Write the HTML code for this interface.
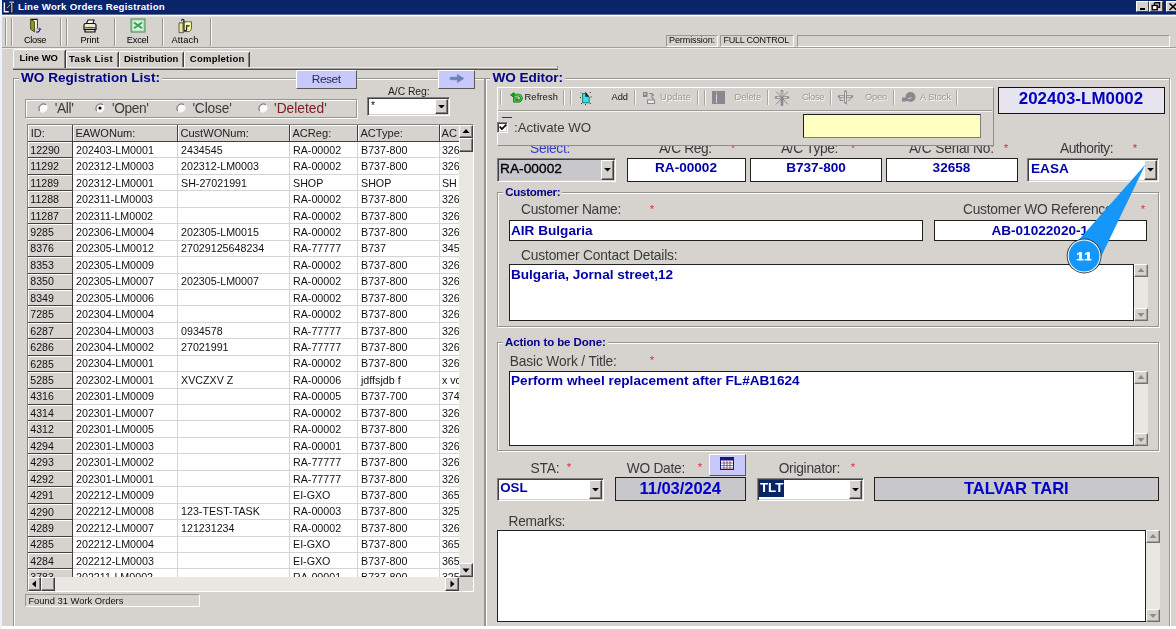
<!DOCTYPE html>
<html><head><meta charset="utf-8"><title>Line Work Orders Registration</title>
<style>
html,body{margin:0;padding:0}
body{width:1176px;height:629px;overflow:hidden;background:#D6D3CE;position:relative;font-family:"Liberation Sans",sans-serif}
.a{position:absolute;display:block}
.t{white-space:pre}
#app{position:absolute;left:0;top:0;width:1176px;height:629px;overflow:hidden;filter:blur(0.4px)}
</style></head>
<body>
<div id="app">
<div class="a" style="left:2px;top:0px;width:1174px;height:14px;background:#0A246A"></div>
<div class="a" style="left:2px;top:14px;width:1174px;height:1px;background:#5E6C9C"></div>
<div class="a" style="left:2px;top:15px;width:1174px;height:1px;background:#fff"></div>
<div class="a" style="left:2px;top:16px;width:1174px;height:1px;background:#E6E4DF"></div>
<svg class="a" style="left:3px;top:1px" width="12" height="13" viewBox="0 0 12 13">
<path d="M1.8 2v9.6h4.6" stroke="#101020" stroke-width="2.6" fill="none"/>
<path d="M9 2v10" stroke="#101020" stroke-width="2.6" fill="none"/>
<path d="M1.4 1.4v9.4h4.4" stroke="#f4f4f4" stroke-width="1.5" fill="none"/>
<path d="M6.4 1.3h4.6M8.8 1.6v9.8" stroke="#B8B49A" stroke-width="1.4" fill="none"/>
<path d="M4.4 6.6l1.2-1.2M6.2 4.6l.9-.9" stroke="#fff" stroke-width="1"/>
</svg>
<span class="a t" style="letter-spacing:0.230px;top:1.79px;font-size:9.7px;line-height:9.7px;color:#fff;font-weight:bold;left:18px;">Line Work Orders Registration</span>
<div class="a" style="left:1136px;top:1px;width:13px;height:11px;background:#D6D3CE;border-top:1px solid #fff;border-left:1px solid #fff;border-right:1px solid #404040;border-bottom:1px solid #404040;box-sizing:border-box"></div>
<div class="a" style="left:1140px;top:8px;width:5px;height:2px;background:#000"></div>
<div class="a" style="left:1149px;top:1px;width:14px;height:11px;background:#D6D3CE;border-top:1px solid #fff;border-left:1px solid #fff;border-right:1px solid #404040;border-bottom:1px solid #404040;box-sizing:border-box"></div>
<svg class="a" style="left:1151px;top:2px" width="10" height="9" viewBox="0 0 10 9"><path d="M3.5 0.8h5v4.5h-1.5 M3.5 0.8v2" stroke="#000" stroke-width="1.4" fill="none"/><rect x="1.2" y="3.4" width="5" height="4.4" fill="#fff" stroke="#000" stroke-width="1.4"/></svg>
<div class="a" style="left:1166px;top:1px;width:14px;height:11px;background:#D6D3CE;border-top:1px solid #fff;border-left:1px solid #fff;border-right:1px solid #404040;border-bottom:1px solid #404040;box-sizing:border-box"></div>
<svg class="a" style="left:1169px;top:3px" width="8" height="8" viewBox="0 0 8 8"><path d="M0.5 0.5l7 6.5M7.5 0.5l-7 6.5" stroke="#000" stroke-width="1.5"/></svg>
<div class="a" style="left:5px;top:18px;width:1px;height:28px;background:#969490"></div>
<div class="a" style="left:6px;top:18px;width:1px;height:28px;background:#F6F5F2"></div>
<div class="a" style="left:11px;top:18px;width:1px;height:28px;background:#969490"></div>
<div class="a" style="left:12px;top:18px;width:1px;height:28px;background:#F6F5F2"></div>
<div class="a" style="left:60px;top:18px;width:1px;height:28px;background:#969490"></div>
<div class="a" style="left:61px;top:18px;width:1px;height:28px;background:#F6F5F2"></div>
<div class="a" style="left:66px;top:18px;width:1px;height:28px;background:#969490"></div>
<div class="a" style="left:67px;top:18px;width:1px;height:28px;background:#F6F5F2"></div>
<div class="a" style="left:114px;top:18px;width:1px;height:28px;background:#969490"></div>
<div class="a" style="left:115px;top:18px;width:1px;height:28px;background:#F6F5F2"></div>
<div class="a" style="left:162px;top:18px;width:1px;height:28px;background:#969490"></div>
<div class="a" style="left:163px;top:18px;width:1px;height:28px;background:#F6F5F2"></div>
<div class="a" style="left:210px;top:18px;width:1px;height:28px;background:#969490"></div>
<div class="a" style="left:211px;top:18px;width:1px;height:28px;background:#F6F5F2"></div>
<div class="a" style="left:2px;top:47px;width:1174px;height:1px;background:#A09E98"></div>
<div class="a" style="left:2px;top:48px;width:1174px;height:1px;background:#EEECE8"></div>
<span class="a t" style="letter-spacing:-0.356px;top:35.53px;font-size:9.3px;line-height:9.3px;color:#000;left:35px;transform:translateX(-50%);">Close</span>
<span class="a t" style="letter-spacing:-0.125px;top:35.53px;font-size:9.3px;line-height:9.3px;color:#000;left:89.7px;transform:translateX(-50%);">Print</span>
<span class="a t" style="letter-spacing:-0.227px;top:35.53px;font-size:9.3px;line-height:9.3px;color:#000;left:137.6px;transform:translateX(-50%);">Excel</span>
<span class="a t" style="letter-spacing:0.140px;top:35.53px;font-size:9.3px;line-height:9.3px;color:#000;left:185px;transform:translateX(-50%);">Attach</span>
<svg class="a" style="left:28px;top:18px" width="15" height="16" viewBox="0 0 15 16">
<path d="M2.6 1.4h6.6v9.2" fill="none" stroke="#1a1a1a" stroke-width="1.1"/>
<rect x="6" y="2" width="2.7" height="8.4" fill="#fff"/>
<path d="M2.6 1.4l3.8 2v10.4l-3.8-2.6z" fill="#8E9C20" stroke="#3A4208" stroke-width="0.9"/>
<path d="M8.2 14c2.4.3 3.6-.7 3.5-2.6" fill="none" stroke="#2428C8" stroke-width="1.3"/>
<path d="M9.9 11.6l1.9-2.1 1.8 2.3z" fill="#2428C8"/>
</svg>
<svg class="a" style="left:82px;top:19px" width="16" height="15" viewBox="0 0 16 15">
<path d="M4.5 4.5l1.5-3.5h6l-1 3.5z" fill="#fff" stroke="#111" stroke-width="1.1"/>
<path d="M2 6.2c0-1 .8-1.7 1.8-1.7h8.4c1 0 1.8.7 1.8 1.7v4.3H2z" fill="#e8e8e8" stroke="#111" stroke-width="1.2"/>
<path d="M3 10.5h10v2.5H3z" fill="#d0d0d0" stroke="#111" stroke-width="1.2"/>
<path d="M6 8.3h4" stroke="#E8E800" stroke-width="1.6"/>
<path d="M2.6 8.8h10.8" stroke="#111" stroke-width="0.9"/>
</svg>
<svg class="a" style="left:130px;top:18.3px" width="16" height="15" viewBox="0 0 16 16" preserveAspectRatio="none">
<rect x="1" y="1" width="14" height="14" fill="#A4D4AC" stroke="#4E8E5C" stroke-width="1"/>
<rect x="2.7" y="2.7" width="10.6" height="10.6" fill="#DDF3E0"/>
<path d="M4 4.8l8 6.2M12 4.8l-8 6.2" stroke="#3AA356" stroke-width="2.1"/>
</svg>
<svg class="a" style="left:177px;top:18.2px" width="17" height="17.4" viewBox="0 0 17 16" preserveAspectRatio="none">
<path d="M2 4.5h4.5v9H2z" fill="#E8E890" stroke="#555" stroke-width="0.9"/>
<path d="M6 3.5h8.5v6.5l-2 2.5H6z" fill="#F4F49A" stroke="#555" stroke-width="0.9"/>
<path d="M4.5 2.5c0-1.6 2.5-1.6 2.5 0v8c0 1.6 2.6 1.6 2.6 0V7.3h3" fill="none" stroke="#222" stroke-width="1.2"/>
<path d="M9.6 5h3.2" stroke="#fff" stroke-width="1.2"/>
</svg>
<div class="a" style="left:666px;top:35px;width:52px;height:12px;background:#D6D3CE;box-sizing:border-box;border:1px solid;border-color:#9A9894 #fff #fff #9A9894"></div>
<div class="a" style="left:720px;top:35px;width:74px;height:12px;background:#D6D3CE;box-sizing:border-box;border:1px solid;border-color:#9A9894 #fff #fff #9A9894"></div>
<div class="a" style="left:797px;top:35px;width:373px;height:12px;background:#D6D3CE;box-sizing:border-box;border:1px solid;border-color:#9A9894 #fff #fff #9A9894"></div>
<span class="a t" style="letter-spacing:-0.092px;top:35.98px;font-size:9.0px;line-height:9.0px;color:#111;left:669px;">Permission:</span>
<span class="a t" style="letter-spacing:-0.224px;top:35.98px;font-size:9.0px;line-height:9.0px;color:#111;left:723.5px;">FULL CONTROL</span>
<div class="a" style="left:13px;top:67px;width:544px;height:1px;background:#ECEAE4"></div>
<div class="a" style="left:13px;top:68px;width:545px;height:1px;background:#A4A29E"></div>
<div class="a" style="left:13px;top:69px;width:545px;height:1px;background:#505050"></div>
<div class="a" style="left:557px;top:66px;width:1px;height:2px;background:#8a8a8a"></div>
<div class="a" style="left:67px;top:51px;width:51px;height:1px;background:#fff"></div>
<div class="a" style="left:66px;top:52px;width:1px;height:15px;background:#fff"></div>
<div class="a" style="left:118px;top:52px;width:1px;height:15px;background:#404040"></div>
<div class="a" style="left:117px;top:53px;width:1px;height:14px;background:#808080"></div>
<span class="a t" style="letter-spacing:0.391px;top:53.96px;font-size:9.5px;line-height:9.5px;color:#000;font-weight:bold;left:69px;">Task List</span>
<div class="a" style="left:120px;top:51px;width:63px;height:1px;background:#fff"></div>
<div class="a" style="left:119px;top:52px;width:1px;height:15px;background:#fff"></div>
<div class="a" style="left:183px;top:52px;width:1px;height:15px;background:#404040"></div>
<div class="a" style="left:182px;top:53px;width:1px;height:14px;background:#808080"></div>
<span class="a t" style="letter-spacing:0.107px;top:53.96px;font-size:9.5px;line-height:9.5px;color:#000;font-weight:bold;left:123.9px;">Distribution</span>
<div class="a" style="left:185px;top:51px;width:64px;height:1px;background:#fff"></div>
<div class="a" style="left:184px;top:52px;width:1px;height:15px;background:#fff"></div>
<div class="a" style="left:249px;top:52px;width:1px;height:15px;background:#404040"></div>
<div class="a" style="left:248px;top:53px;width:1px;height:14px;background:#808080"></div>
<span class="a t" style="letter-spacing:0.245px;top:53.96px;font-size:9.5px;line-height:9.5px;color:#000;font-weight:bold;left:189.8px;">Completion</span>
<div class="a" style="left:13px;top:49px;width:53px;height:19px;background:#D6D3CE"></div>
<div class="a" style="left:13px;top:50px;width:1px;height:18px;background:#fff"></div>
<div class="a" style="left:14px;top:49px;width:51px;height:1px;background:#fff"></div>
<div class="a" style="left:65px;top:50px;width:1px;height:18px;background:#404040"></div>
<div class="a" style="left:64px;top:51px;width:1px;height:17px;background:#808080"></div>
<span class="a t" style="letter-spacing:-0.004px;top:52.56px;font-size:9.5px;line-height:9.5px;color:#000;font-weight:bold;left:19.5px;">Line WO</span>
<div class="a" style="left:13px;top:78px;width:472px;height:582px;box-sizing:border-box;border:1px solid #969490"></div>
<div class="a" style="left:14px;top:79px;width:472px;height:582px;box-sizing:border-box;border:1px solid #fff;border-right-color:#fff;border-bottom-color:#fff;clip-path:polygon(0 0,calc(100% - 2px) 0,calc(100% - 2px) 1px,1px 1px,1px calc(100% - 2px),0 calc(100% - 2px),0 0, 100% 0, 100% 100%, 0 100%, 0 calc(100% - 1px), calc(100% - 1px) calc(100% - 1px), calc(100% - 1px) 0)"></div>
<div class="a" style="left:485px;top:78px;width:685px;height:582px;box-sizing:border-box;border:1px solid #969490"></div>
<div class="a" style="left:486px;top:79px;width:685px;height:582px;box-sizing:border-box;border:1px solid #fff;border-right-color:#fff;border-bottom-color:#fff;clip-path:polygon(0 0,calc(100% - 2px) 0,calc(100% - 2px) 1px,1px 1px,1px calc(100% - 2px),0 calc(100% - 2px),0 0, 100% 0, 100% 100%, 0 100%, 0 calc(100% - 1px), calc(100% - 1px) calc(100% - 1px), calc(100% - 1px) 0)"></div>
<div class="a" style="left:19px;top:72px;width:143px;height:12px;background:#D6D3CE"></div>
<span class="a t" style="letter-spacing:0.001px;top:70.69px;font-size:13.6px;line-height:13.6px;color:#00008B;font-weight:bold;left:21px;">WO Registration List:</span>
<div class="a" style="left:490px;top:72px;width:75px;height:12px;background:#D6D3CE"></div>
<span class="a t" style="letter-spacing:-0.048px;top:70.69px;font-size:13.6px;line-height:13.6px;color:#00008B;font-weight:bold;left:492.5px;">WO Editor:</span>
<div class="a" style="left:296px;top:70px;width:61px;height:19px;background:#C8C8FA;box-sizing:border-box;border:1px solid;border-color:#fff #585858 #585858 #fff"></div>
<span class="a t" style="letter-spacing:-0.406px;top:73.91px;font-size:11.8px;line-height:11.8px;color:#282850;left:326.2px;transform:translateX(-50%);">Reset</span>
<div class="a" style="left:438px;top:70px;width:37px;height:19px;background:#C8C8FA;box-sizing:border-box;border:1px solid;border-color:#fff #585858 #585858 #fff"></div>
<svg class="a" style="left:449px;top:72.6px" width="16" height="11" viewBox="0 0 16 11"><path d="M1.2 4.2h7.2V1.4l6.4 4.1-6.4 4.1V6.8H1.2z" fill="#6484B4" stroke="#5878A8" stroke-width="0.5"/></svg>
<div class="a" style="left:25px;top:99px;width:332px;height:19px;box-sizing:border-box;border:1px solid #969490"></div>
<div class="a" style="left:26px;top:100px;width:332px;height:19px;box-sizing:border-box;border:1px solid #fff;border-right-color:#fff;border-bottom-color:#fff;clip-path:polygon(0 0,calc(100% - 2px) 0,calc(100% - 2px) 1px,1px 1px,1px calc(100% - 2px),0 calc(100% - 2px),0 0, 100% 0, 100% 100%, 0 100%, 0 calc(100% - 1px), calc(100% - 1px) calc(100% - 1px), calc(100% - 1px) 0)"></div>
<svg class="a" style="left:37px;top:102px" width="12" height="12" viewBox="0 0 12 12"><circle cx="6" cy="6" r="4.2" fill="#fff"/><path d="M2.7 8.9A4.5 4.5 0 0 1 8.9 2.7" fill="none" stroke="#787878" stroke-width="1.2"/><path d="M9.3 3.1A4.5 4.5 0 0 1 3.1 9.3" fill="none" stroke="#f4f4f4" stroke-width="1.1"/></svg>
<span class="a t" style="letter-spacing:-0.346px;top:102.26px;font-size:13.75px;line-height:13.75px;color:#3a3a3a;left:54.7px;">&#x27;All&#x27;</span>
<svg class="a" style="left:94px;top:102px" width="12" height="12" viewBox="0 0 12 12"><circle cx="6" cy="6" r="4.2" fill="#fff"/><path d="M2.7 8.9A4.5 4.5 0 0 1 8.9 2.7" fill="none" stroke="#787878" stroke-width="1.2"/><path d="M9.3 3.1A4.5 4.5 0 0 1 3.1 9.3" fill="none" stroke="#f4f4f4" stroke-width="1.1"/><circle cx="6" cy="6" r="1.6" fill="#000"/></svg>
<span class="a t" style="letter-spacing:-0.415px;top:102.26px;font-size:13.75px;line-height:13.75px;color:#3a3a3a;left:112px;">&#x27;Open&#x27;</span>
<svg class="a" style="left:175px;top:102px" width="12" height="12" viewBox="0 0 12 12"><circle cx="6" cy="6" r="4.2" fill="#fff"/><path d="M2.7 8.9A4.5 4.5 0 0 1 8.9 2.7" fill="none" stroke="#787878" stroke-width="1.2"/><path d="M9.3 3.1A4.5 4.5 0 0 1 3.1 9.3" fill="none" stroke="#f4f4f4" stroke-width="1.1"/></svg>
<span class="a t" style="letter-spacing:-0.144px;top:102.26px;font-size:13.75px;line-height:13.75px;color:#3a3a3a;left:192.4px;">&#x27;Close&#x27;</span>
<svg class="a" style="left:257px;top:102px" width="12" height="12" viewBox="0 0 12 12"><circle cx="6" cy="6" r="4.2" fill="#fff"/><path d="M2.7 8.9A4.5 4.5 0 0 1 8.9 2.7" fill="none" stroke="#787878" stroke-width="1.2"/><path d="M9.3 3.1A4.5 4.5 0 0 1 3.1 9.3" fill="none" stroke="#f4f4f4" stroke-width="1.1"/></svg>
<span class="a t" style="letter-spacing:0.016px;top:102.26px;font-size:13.75px;line-height:13.75px;color:#7A2020;left:274px;">&#x27;Deleted&#x27;</span>
<span class="a t" style="letter-spacing:-0.082px;top:86.50px;font-size:10.4px;line-height:10.4px;color:#222;left:388px;">A/C Reg:</span>
<div class="a" style="left:367px;top:97px;width:83px;height:19px;background:#fff;box-sizing:border-box;border:1px solid;border-color:#808080 #fff #fff #808080;box-shadow:inset 1px 1px 0 #404040,inset -1px -1px 0 #D6D3CE"></div>
<div class="a" style="left:435px;top:99px;width:13px;height:15px;background:#D6D3CE;box-sizing:border-box;border:1px solid;border-color:#fff #404040 #404040 #fff;box-shadow:inset -1px -1px 0 #808080"></div>
<svg class="a" style="left:438.0px;top:104.9px" width="7" height="3.6" viewBox="0 0 7 3.6"><path d="M0.2 0h6.6L3.5 3.6z" fill="#000"/></svg>
<span class="a t" style="top:100.73px;font-size:10px;line-height:10px;color:#000;left:371px;">*</span>
<div class="a" style="left:27px;top:124px;width:447px;height:468px;background:#fff;box-sizing:border-box;border:1px solid;border-color:#808080 #fff #fff #808080"></div>
<div class="a" style="left:28px;top:125px;width:1px;height:465px;background:#404040"></div>
<div class="a" style="left:28px;top:124.5px;width:445px;height:1px;background:#404040"></div>
<div class="a" style="left:28px;top:125px;width:431px;height:452px;overflow:hidden">
<div class="a" style="left:0px;top:0px;width:431px;height:16px;background:#D6D3CE"></div>
<div class="a" style="left:0px;top:0px;width:1px;height:16px;background:#fff"></div>
<div class="a" style="left:0px;top:0px;width:45px;height:1px;background:#fff"></div>
<div class="a" style="left:44px;top:0px;width:1px;height:16px;background:#404040"></div>
<span class="a t" style="left:2.6999999999999993px;top:3.40px;font-size:11.1px;line-height:11.1px;color:#222">ID:</span>
<div class="a" style="left:45px;top:0px;width:1px;height:16px;background:#fff"></div>
<div class="a" style="left:45px;top:0px;width:105px;height:1px;background:#fff"></div>
<div class="a" style="left:149px;top:0px;width:1px;height:16px;background:#404040"></div>
<span class="a t" style="left:47.400000000000006px;top:3.40px;font-size:11.1px;line-height:11.1px;color:#222">EAWONum:</span>
<div class="a" style="left:150px;top:0px;width:1px;height:16px;background:#fff"></div>
<div class="a" style="left:150px;top:0px;width:112px;height:1px;background:#fff"></div>
<div class="a" style="left:261px;top:0px;width:1px;height:16px;background:#404040"></div>
<span class="a t" style="left:152.4px;top:3.40px;font-size:11.1px;line-height:11.1px;color:#222">CustWONum:</span>
<div class="a" style="left:262px;top:0px;width:1px;height:16px;background:#fff"></div>
<div class="a" style="left:262px;top:0px;width:68px;height:1px;background:#fff"></div>
<div class="a" style="left:329px;top:0px;width:1px;height:16px;background:#404040"></div>
<span class="a t" style="left:264.4px;top:3.40px;font-size:11.1px;line-height:11.1px;color:#222">ACReg:</span>
<div class="a" style="left:330px;top:0px;width:1px;height:16px;background:#fff"></div>
<div class="a" style="left:330px;top:0px;width:82px;height:1px;background:#fff"></div>
<div class="a" style="left:411px;top:0px;width:1px;height:16px;background:#404040"></div>
<span class="a t" style="left:332.4px;top:3.40px;font-size:11.1px;line-height:11.1px;color:#222">ACType:</span>
<div class="a" style="left:412px;top:0px;width:1px;height:16px;background:#fff"></div>
<div class="a" style="left:412px;top:0px;width:80px;height:1px;background:#fff"></div>
<div class="a" style="left:491px;top:0px;width:1px;height:16px;background:#404040"></div>
<span class="a t" style="left:413.6px;top:3.40px;font-size:11.1px;line-height:11.1px;color:#222">AC S/N:</span>
<div class="a" style="left:0px;top:16px;width:431px;height:1px;background:#404040"></div>
<div class="a" style="left:0px;top:17px;width:45px;height:16px;background:#D6D3CE"></div>
<div class="a" style="left:0px;top:17px;width:44px;height:1px;background:#fff"></div>
<div class="a" style="left:0px;top:17px;width:1px;height:16px;background:#fff"></div>
<div class="a" style="left:0px;top:32px;width:45px;height:1px;background:#404040"></div>
<div class="a" style="left:44px;top:17px;width:1px;height:16px;background:#404040"></div>
<span class="a t" style="left:2.3000000000000007px;top:19.83px;font-size:10.6px;line-height:10.6px;color:#111">12290</span>
<span class="a t" style="left:48.0px;top:19.74px;font-size:10.7px;line-height:10.7px;color:#111">202403-LM0001</span>
<span class="a t" style="left:153.0px;top:19.74px;font-size:10.7px;line-height:10.7px;color:#111">2434545</span>
<span class="a t" style="left:265.0px;top:19.74px;font-size:10.7px;line-height:10.7px;color:#111">RA-00002</span>
<span class="a t" style="left:333.0px;top:19.74px;font-size:10.7px;line-height:10.7px;color:#111">B737-800</span>
<span class="a t" style="left:413.9px;top:19.74px;font-size:10.7px;line-height:10.7px;color:#111">32658</span>
<div class="a" style="left:45px;top:32px;width:388px;height:1px;background:#D4D4D4"></div>
<div class="a" style="left:0px;top:33px;width:45px;height:17px;background:#D6D3CE"></div>
<div class="a" style="left:0px;top:33px;width:44px;height:1px;background:#fff"></div>
<div class="a" style="left:0px;top:33px;width:1px;height:17px;background:#fff"></div>
<div class="a" style="left:0px;top:49px;width:45px;height:1px;background:#404040"></div>
<div class="a" style="left:44px;top:33px;width:1px;height:17px;background:#404040"></div>
<span class="a t" style="left:2.3000000000000007px;top:36.27px;font-size:10.6px;line-height:10.6px;color:#111">11292</span>
<span class="a t" style="left:48.0px;top:36.18px;font-size:10.7px;line-height:10.7px;color:#111">202312-LM0003</span>
<span class="a t" style="left:153.0px;top:36.18px;font-size:10.7px;line-height:10.7px;color:#111">202312-LM0003</span>
<span class="a t" style="left:265.0px;top:36.18px;font-size:10.7px;line-height:10.7px;color:#111">RA-00002</span>
<span class="a t" style="left:333.0px;top:36.18px;font-size:10.7px;line-height:10.7px;color:#111">B737-800</span>
<span class="a t" style="left:413.9px;top:36.18px;font-size:10.7px;line-height:10.7px;color:#111">32658</span>
<div class="a" style="left:45px;top:49px;width:388px;height:1px;background:#D4D4D4"></div>
<div class="a" style="left:0px;top:50px;width:45px;height:16px;background:#D6D3CE"></div>
<div class="a" style="left:0px;top:50px;width:44px;height:1px;background:#fff"></div>
<div class="a" style="left:0px;top:50px;width:1px;height:16px;background:#fff"></div>
<div class="a" style="left:0px;top:65px;width:45px;height:1px;background:#404040"></div>
<div class="a" style="left:44px;top:50px;width:1px;height:16px;background:#404040"></div>
<span class="a t" style="left:2.3000000000000007px;top:52.71px;font-size:10.6px;line-height:10.6px;color:#111">11289</span>
<span class="a t" style="left:48.0px;top:52.62px;font-size:10.7px;line-height:10.7px;color:#111">202312-LM0001</span>
<span class="a t" style="left:153.0px;top:52.62px;font-size:10.7px;line-height:10.7px;color:#111">SH-27021991</span>
<span class="a t" style="left:265.0px;top:52.62px;font-size:10.7px;line-height:10.7px;color:#111">SHOP</span>
<span class="a t" style="left:333.0px;top:52.62px;font-size:10.7px;line-height:10.7px;color:#111">SHOP</span>
<span class="a t" style="left:413.9px;top:52.62px;font-size:10.7px;line-height:10.7px;color:#111">SH</span>
<div class="a" style="left:45px;top:65px;width:388px;height:1px;background:#D4D4D4"></div>
<div class="a" style="left:0px;top:66px;width:45px;height:17px;background:#D6D3CE"></div>
<div class="a" style="left:0px;top:66px;width:44px;height:1px;background:#fff"></div>
<div class="a" style="left:0px;top:66px;width:1px;height:17px;background:#fff"></div>
<div class="a" style="left:0px;top:82px;width:45px;height:1px;background:#404040"></div>
<div class="a" style="left:44px;top:66px;width:1px;height:17px;background:#404040"></div>
<span class="a t" style="left:2.3000000000000007px;top:69.15px;font-size:10.6px;line-height:10.6px;color:#111">11288</span>
<span class="a t" style="left:48.0px;top:69.06px;font-size:10.7px;line-height:10.7px;color:#111">202311-LM0003</span>
<span class="a t" style="left:153.0px;top:69.06px;font-size:10.7px;line-height:10.7px;color:#111"></span>
<span class="a t" style="left:265.0px;top:69.06px;font-size:10.7px;line-height:10.7px;color:#111">RA-00002</span>
<span class="a t" style="left:333.0px;top:69.06px;font-size:10.7px;line-height:10.7px;color:#111">B737-800</span>
<span class="a t" style="left:413.9px;top:69.06px;font-size:10.7px;line-height:10.7px;color:#111">32658</span>
<div class="a" style="left:45px;top:82px;width:388px;height:1px;background:#D4D4D4"></div>
<div class="a" style="left:0px;top:83px;width:45px;height:16px;background:#D6D3CE"></div>
<div class="a" style="left:0px;top:83px;width:44px;height:1px;background:#fff"></div>
<div class="a" style="left:0px;top:83px;width:1px;height:16px;background:#fff"></div>
<div class="a" style="left:0px;top:98px;width:45px;height:1px;background:#404040"></div>
<div class="a" style="left:44px;top:83px;width:1px;height:16px;background:#404040"></div>
<span class="a t" style="left:2.3000000000000007px;top:85.59px;font-size:10.6px;line-height:10.6px;color:#111">11287</span>
<span class="a t" style="left:48.0px;top:85.50px;font-size:10.7px;line-height:10.7px;color:#111">202311-LM0002</span>
<span class="a t" style="left:153.0px;top:85.50px;font-size:10.7px;line-height:10.7px;color:#111"></span>
<span class="a t" style="left:265.0px;top:85.50px;font-size:10.7px;line-height:10.7px;color:#111">RA-00002</span>
<span class="a t" style="left:333.0px;top:85.50px;font-size:10.7px;line-height:10.7px;color:#111">B737-800</span>
<span class="a t" style="left:413.9px;top:85.50px;font-size:10.7px;line-height:10.7px;color:#111">32658</span>
<div class="a" style="left:45px;top:98px;width:388px;height:1px;background:#D4D4D4"></div>
<div class="a" style="left:0px;top:99px;width:45px;height:17px;background:#D6D3CE"></div>
<div class="a" style="left:0px;top:99px;width:44px;height:1px;background:#fff"></div>
<div class="a" style="left:0px;top:99px;width:1px;height:17px;background:#fff"></div>
<div class="a" style="left:0px;top:115px;width:45px;height:1px;background:#404040"></div>
<div class="a" style="left:44px;top:99px;width:1px;height:17px;background:#404040"></div>
<span class="a t" style="left:2.3000000000000007px;top:102.03px;font-size:10.6px;line-height:10.6px;color:#111">9285</span>
<span class="a t" style="left:48.0px;top:101.94px;font-size:10.7px;line-height:10.7px;color:#111">202306-LM0004</span>
<span class="a t" style="left:153.0px;top:101.94px;font-size:10.7px;line-height:10.7px;color:#111">202305-LM0015</span>
<span class="a t" style="left:265.0px;top:101.94px;font-size:10.7px;line-height:10.7px;color:#111">RA-00002</span>
<span class="a t" style="left:333.0px;top:101.94px;font-size:10.7px;line-height:10.7px;color:#111">B737-800</span>
<span class="a t" style="left:413.9px;top:101.94px;font-size:10.7px;line-height:10.7px;color:#111">32658</span>
<div class="a" style="left:45px;top:115px;width:388px;height:1px;background:#D4D4D4"></div>
<div class="a" style="left:0px;top:116px;width:45px;height:16px;background:#D6D3CE"></div>
<div class="a" style="left:0px;top:116px;width:44px;height:1px;background:#fff"></div>
<div class="a" style="left:0px;top:116px;width:1px;height:16px;background:#fff"></div>
<div class="a" style="left:0px;top:131px;width:45px;height:1px;background:#404040"></div>
<div class="a" style="left:44px;top:116px;width:1px;height:16px;background:#404040"></div>
<span class="a t" style="left:2.3000000000000007px;top:118.47px;font-size:10.6px;line-height:10.6px;color:#111">8376</span>
<span class="a t" style="left:48.0px;top:118.38px;font-size:10.7px;line-height:10.7px;color:#111">202305-LM0012</span>
<span class="a t" style="left:153.0px;top:118.38px;font-size:10.7px;line-height:10.7px;color:#111">27029125648234</span>
<span class="a t" style="left:265.0px;top:118.38px;font-size:10.7px;line-height:10.7px;color:#111">RA-77777</span>
<span class="a t" style="left:333.0px;top:118.38px;font-size:10.7px;line-height:10.7px;color:#111">B737</span>
<span class="a t" style="left:413.9px;top:118.38px;font-size:10.7px;line-height:10.7px;color:#111">34567</span>
<div class="a" style="left:45px;top:131px;width:388px;height:1px;background:#D4D4D4"></div>
<div class="a" style="left:0px;top:132px;width:45px;height:17px;background:#D6D3CE"></div>
<div class="a" style="left:0px;top:132px;width:44px;height:1px;background:#fff"></div>
<div class="a" style="left:0px;top:132px;width:1px;height:17px;background:#fff"></div>
<div class="a" style="left:0px;top:148px;width:45px;height:1px;background:#404040"></div>
<div class="a" style="left:44px;top:132px;width:1px;height:17px;background:#404040"></div>
<span class="a t" style="left:2.3000000000000007px;top:134.91px;font-size:10.6px;line-height:10.6px;color:#111">8353</span>
<span class="a t" style="left:48.0px;top:134.82px;font-size:10.7px;line-height:10.7px;color:#111">202305-LM0009</span>
<span class="a t" style="left:153.0px;top:134.82px;font-size:10.7px;line-height:10.7px;color:#111"></span>
<span class="a t" style="left:265.0px;top:134.82px;font-size:10.7px;line-height:10.7px;color:#111">RA-00002</span>
<span class="a t" style="left:333.0px;top:134.82px;font-size:10.7px;line-height:10.7px;color:#111">B737-800</span>
<span class="a t" style="left:413.9px;top:134.82px;font-size:10.7px;line-height:10.7px;color:#111">32658</span>
<div class="a" style="left:45px;top:148px;width:388px;height:1px;background:#D4D4D4"></div>
<div class="a" style="left:0px;top:149px;width:45px;height:16px;background:#D6D3CE"></div>
<div class="a" style="left:0px;top:149px;width:44px;height:1px;background:#fff"></div>
<div class="a" style="left:0px;top:149px;width:1px;height:16px;background:#fff"></div>
<div class="a" style="left:0px;top:164px;width:45px;height:1px;background:#404040"></div>
<div class="a" style="left:44px;top:149px;width:1px;height:16px;background:#404040"></div>
<span class="a t" style="left:2.3000000000000007px;top:151.35px;font-size:10.6px;line-height:10.6px;color:#111">8350</span>
<span class="a t" style="left:48.0px;top:151.26px;font-size:10.7px;line-height:10.7px;color:#111">202305-LM0007</span>
<span class="a t" style="left:153.0px;top:151.26px;font-size:10.7px;line-height:10.7px;color:#111">202305-LM0007</span>
<span class="a t" style="left:265.0px;top:151.26px;font-size:10.7px;line-height:10.7px;color:#111">RA-00002</span>
<span class="a t" style="left:333.0px;top:151.26px;font-size:10.7px;line-height:10.7px;color:#111">B737-800</span>
<span class="a t" style="left:413.9px;top:151.26px;font-size:10.7px;line-height:10.7px;color:#111">32658</span>
<div class="a" style="left:45px;top:164px;width:388px;height:1px;background:#D4D4D4"></div>
<div class="a" style="left:0px;top:165px;width:45px;height:16px;background:#D6D3CE"></div>
<div class="a" style="left:0px;top:165px;width:44px;height:1px;background:#fff"></div>
<div class="a" style="left:0px;top:165px;width:1px;height:16px;background:#fff"></div>
<div class="a" style="left:0px;top:180px;width:45px;height:1px;background:#404040"></div>
<div class="a" style="left:44px;top:165px;width:1px;height:16px;background:#404040"></div>
<span class="a t" style="left:2.3000000000000007px;top:167.79px;font-size:10.6px;line-height:10.6px;color:#111">8349</span>
<span class="a t" style="left:48.0px;top:167.70px;font-size:10.7px;line-height:10.7px;color:#111">202305-LM0006</span>
<span class="a t" style="left:153.0px;top:167.70px;font-size:10.7px;line-height:10.7px;color:#111"></span>
<span class="a t" style="left:265.0px;top:167.70px;font-size:10.7px;line-height:10.7px;color:#111">RA-00002</span>
<span class="a t" style="left:333.0px;top:167.70px;font-size:10.7px;line-height:10.7px;color:#111">B737-800</span>
<span class="a t" style="left:413.9px;top:167.70px;font-size:10.7px;line-height:10.7px;color:#111">32658</span>
<div class="a" style="left:45px;top:180px;width:388px;height:1px;background:#D4D4D4"></div>
<div class="a" style="left:0px;top:181px;width:45px;height:17px;background:#D6D3CE"></div>
<div class="a" style="left:0px;top:181px;width:44px;height:1px;background:#fff"></div>
<div class="a" style="left:0px;top:181px;width:1px;height:17px;background:#fff"></div>
<div class="a" style="left:0px;top:197px;width:45px;height:1px;background:#404040"></div>
<div class="a" style="left:44px;top:181px;width:1px;height:17px;background:#404040"></div>
<span class="a t" style="left:2.3000000000000007px;top:184.23px;font-size:10.6px;line-height:10.6px;color:#111">7285</span>
<span class="a t" style="left:48.0px;top:184.14px;font-size:10.7px;line-height:10.7px;color:#111">202304-LM0004</span>
<span class="a t" style="left:153.0px;top:184.14px;font-size:10.7px;line-height:10.7px;color:#111"></span>
<span class="a t" style="left:265.0px;top:184.14px;font-size:10.7px;line-height:10.7px;color:#111">RA-00002</span>
<span class="a t" style="left:333.0px;top:184.14px;font-size:10.7px;line-height:10.7px;color:#111">B737-800</span>
<span class="a t" style="left:413.9px;top:184.14px;font-size:10.7px;line-height:10.7px;color:#111">32658</span>
<div class="a" style="left:45px;top:197px;width:388px;height:1px;background:#D4D4D4"></div>
<div class="a" style="left:0px;top:198px;width:45px;height:16px;background:#D6D3CE"></div>
<div class="a" style="left:0px;top:198px;width:44px;height:1px;background:#fff"></div>
<div class="a" style="left:0px;top:198px;width:1px;height:16px;background:#fff"></div>
<div class="a" style="left:0px;top:213px;width:45px;height:1px;background:#404040"></div>
<div class="a" style="left:44px;top:198px;width:1px;height:16px;background:#404040"></div>
<span class="a t" style="left:2.3000000000000007px;top:200.67px;font-size:10.6px;line-height:10.6px;color:#111">6287</span>
<span class="a t" style="left:48.0px;top:200.58px;font-size:10.7px;line-height:10.7px;color:#111">202304-LM0003</span>
<span class="a t" style="left:153.0px;top:200.58px;font-size:10.7px;line-height:10.7px;color:#111">0934578</span>
<span class="a t" style="left:265.0px;top:200.58px;font-size:10.7px;line-height:10.7px;color:#111">RA-77777</span>
<span class="a t" style="left:333.0px;top:200.58px;font-size:10.7px;line-height:10.7px;color:#111">B737-800</span>
<span class="a t" style="left:413.9px;top:200.58px;font-size:10.7px;line-height:10.7px;color:#111">32658</span>
<div class="a" style="left:45px;top:213px;width:388px;height:1px;background:#D4D4D4"></div>
<div class="a" style="left:0px;top:214px;width:45px;height:17px;background:#D6D3CE"></div>
<div class="a" style="left:0px;top:214px;width:44px;height:1px;background:#fff"></div>
<div class="a" style="left:0px;top:214px;width:1px;height:17px;background:#fff"></div>
<div class="a" style="left:0px;top:230px;width:45px;height:1px;background:#404040"></div>
<div class="a" style="left:44px;top:214px;width:1px;height:17px;background:#404040"></div>
<span class="a t" style="left:2.3000000000000007px;top:217.11px;font-size:10.6px;line-height:10.6px;color:#111">6286</span>
<span class="a t" style="left:48.0px;top:217.02px;font-size:10.7px;line-height:10.7px;color:#111">202304-LM0002</span>
<span class="a t" style="left:153.0px;top:217.02px;font-size:10.7px;line-height:10.7px;color:#111">27021991</span>
<span class="a t" style="left:265.0px;top:217.02px;font-size:10.7px;line-height:10.7px;color:#111">RA-77777</span>
<span class="a t" style="left:333.0px;top:217.02px;font-size:10.7px;line-height:10.7px;color:#111">B737-800</span>
<span class="a t" style="left:413.9px;top:217.02px;font-size:10.7px;line-height:10.7px;color:#111">32658</span>
<div class="a" style="left:45px;top:230px;width:388px;height:1px;background:#D4D4D4"></div>
<div class="a" style="left:0px;top:231px;width:45px;height:16px;background:#D6D3CE"></div>
<div class="a" style="left:0px;top:231px;width:44px;height:1px;background:#fff"></div>
<div class="a" style="left:0px;top:231px;width:1px;height:16px;background:#fff"></div>
<div class="a" style="left:0px;top:246px;width:45px;height:1px;background:#404040"></div>
<div class="a" style="left:44px;top:231px;width:1px;height:16px;background:#404040"></div>
<span class="a t" style="left:2.3000000000000007px;top:233.55px;font-size:10.6px;line-height:10.6px;color:#111">6285</span>
<span class="a t" style="left:48.0px;top:233.46px;font-size:10.7px;line-height:10.7px;color:#111">202304-LM0001</span>
<span class="a t" style="left:153.0px;top:233.46px;font-size:10.7px;line-height:10.7px;color:#111"></span>
<span class="a t" style="left:265.0px;top:233.46px;font-size:10.7px;line-height:10.7px;color:#111">RA-00002</span>
<span class="a t" style="left:333.0px;top:233.46px;font-size:10.7px;line-height:10.7px;color:#111">B737-800</span>
<span class="a t" style="left:413.9px;top:233.46px;font-size:10.7px;line-height:10.7px;color:#111">32658</span>
<div class="a" style="left:45px;top:246px;width:388px;height:1px;background:#D4D4D4"></div>
<div class="a" style="left:0px;top:247px;width:45px;height:17px;background:#D6D3CE"></div>
<div class="a" style="left:0px;top:247px;width:44px;height:1px;background:#fff"></div>
<div class="a" style="left:0px;top:247px;width:1px;height:17px;background:#fff"></div>
<div class="a" style="left:0px;top:263px;width:45px;height:1px;background:#404040"></div>
<div class="a" style="left:44px;top:247px;width:1px;height:17px;background:#404040"></div>
<span class="a t" style="left:2.3000000000000007px;top:249.99px;font-size:10.6px;line-height:10.6px;color:#111">5285</span>
<span class="a t" style="left:48.0px;top:249.90px;font-size:10.7px;line-height:10.7px;color:#111">202302-LM0001</span>
<span class="a t" style="left:153.0px;top:249.90px;font-size:10.7px;line-height:10.7px;color:#111">XVCZXV Z</span>
<span class="a t" style="left:265.0px;top:249.90px;font-size:10.7px;line-height:10.7px;color:#111">RA-00006</span>
<span class="a t" style="left:333.0px;top:249.90px;font-size:10.7px;line-height:10.7px;color:#111">jdffsjdb f</span>
<span class="a t" style="left:413.9px;top:249.90px;font-size:10.7px;line-height:10.7px;color:#111">x vcx</span>
<div class="a" style="left:45px;top:263px;width:388px;height:1px;background:#D4D4D4"></div>
<div class="a" style="left:0px;top:264px;width:45px;height:16px;background:#D6D3CE"></div>
<div class="a" style="left:0px;top:264px;width:44px;height:1px;background:#fff"></div>
<div class="a" style="left:0px;top:264px;width:1px;height:16px;background:#fff"></div>
<div class="a" style="left:0px;top:279px;width:45px;height:1px;background:#404040"></div>
<div class="a" style="left:44px;top:264px;width:1px;height:16px;background:#404040"></div>
<span class="a t" style="left:2.3000000000000007px;top:266.43px;font-size:10.6px;line-height:10.6px;color:#111">4316</span>
<span class="a t" style="left:48.0px;top:266.34px;font-size:10.7px;line-height:10.7px;color:#111">202301-LM0009</span>
<span class="a t" style="left:153.0px;top:266.34px;font-size:10.7px;line-height:10.7px;color:#111"></span>
<span class="a t" style="left:265.0px;top:266.34px;font-size:10.7px;line-height:10.7px;color:#111">RA-00005</span>
<span class="a t" style="left:333.0px;top:266.34px;font-size:10.7px;line-height:10.7px;color:#111">B737-700</span>
<span class="a t" style="left:413.9px;top:266.34px;font-size:10.7px;line-height:10.7px;color:#111">37456</span>
<div class="a" style="left:45px;top:279px;width:388px;height:1px;background:#D4D4D4"></div>
<div class="a" style="left:0px;top:280px;width:45px;height:16px;background:#D6D3CE"></div>
<div class="a" style="left:0px;top:280px;width:44px;height:1px;background:#fff"></div>
<div class="a" style="left:0px;top:280px;width:1px;height:16px;background:#fff"></div>
<div class="a" style="left:0px;top:295px;width:45px;height:1px;background:#404040"></div>
<div class="a" style="left:44px;top:280px;width:1px;height:16px;background:#404040"></div>
<span class="a t" style="left:2.3000000000000007px;top:282.87px;font-size:10.6px;line-height:10.6px;color:#111">4314</span>
<span class="a t" style="left:48.0px;top:282.78px;font-size:10.7px;line-height:10.7px;color:#111">202301-LM0007</span>
<span class="a t" style="left:153.0px;top:282.78px;font-size:10.7px;line-height:10.7px;color:#111"></span>
<span class="a t" style="left:265.0px;top:282.78px;font-size:10.7px;line-height:10.7px;color:#111">RA-00002</span>
<span class="a t" style="left:333.0px;top:282.78px;font-size:10.7px;line-height:10.7px;color:#111">B737-800</span>
<span class="a t" style="left:413.9px;top:282.78px;font-size:10.7px;line-height:10.7px;color:#111">32658</span>
<div class="a" style="left:45px;top:295px;width:388px;height:1px;background:#D4D4D4"></div>
<div class="a" style="left:0px;top:296px;width:45px;height:17px;background:#D6D3CE"></div>
<div class="a" style="left:0px;top:296px;width:44px;height:1px;background:#fff"></div>
<div class="a" style="left:0px;top:296px;width:1px;height:17px;background:#fff"></div>
<div class="a" style="left:0px;top:312px;width:45px;height:1px;background:#404040"></div>
<div class="a" style="left:44px;top:296px;width:1px;height:17px;background:#404040"></div>
<span class="a t" style="left:2.3000000000000007px;top:299.31px;font-size:10.6px;line-height:10.6px;color:#111">4312</span>
<span class="a t" style="left:48.0px;top:299.22px;font-size:10.7px;line-height:10.7px;color:#111">202301-LM0005</span>
<span class="a t" style="left:153.0px;top:299.22px;font-size:10.7px;line-height:10.7px;color:#111"></span>
<span class="a t" style="left:265.0px;top:299.22px;font-size:10.7px;line-height:10.7px;color:#111">RA-00002</span>
<span class="a t" style="left:333.0px;top:299.22px;font-size:10.7px;line-height:10.7px;color:#111">B737-800</span>
<span class="a t" style="left:413.9px;top:299.22px;font-size:10.7px;line-height:10.7px;color:#111">32658</span>
<div class="a" style="left:45px;top:312px;width:388px;height:1px;background:#D4D4D4"></div>
<div class="a" style="left:0px;top:313px;width:45px;height:16px;background:#D6D3CE"></div>
<div class="a" style="left:0px;top:313px;width:44px;height:1px;background:#fff"></div>
<div class="a" style="left:0px;top:313px;width:1px;height:16px;background:#fff"></div>
<div class="a" style="left:0px;top:328px;width:45px;height:1px;background:#404040"></div>
<div class="a" style="left:44px;top:313px;width:1px;height:16px;background:#404040"></div>
<span class="a t" style="left:2.3000000000000007px;top:315.75px;font-size:10.6px;line-height:10.6px;color:#111">4294</span>
<span class="a t" style="left:48.0px;top:315.66px;font-size:10.7px;line-height:10.7px;color:#111">202301-LM0003</span>
<span class="a t" style="left:153.0px;top:315.66px;font-size:10.7px;line-height:10.7px;color:#111"></span>
<span class="a t" style="left:265.0px;top:315.66px;font-size:10.7px;line-height:10.7px;color:#111">RA-00001</span>
<span class="a t" style="left:333.0px;top:315.66px;font-size:10.7px;line-height:10.7px;color:#111">B737-800</span>
<span class="a t" style="left:413.9px;top:315.66px;font-size:10.7px;line-height:10.7px;color:#111">32658</span>
<div class="a" style="left:45px;top:328px;width:388px;height:1px;background:#D4D4D4"></div>
<div class="a" style="left:0px;top:329px;width:45px;height:17px;background:#D6D3CE"></div>
<div class="a" style="left:0px;top:329px;width:44px;height:1px;background:#fff"></div>
<div class="a" style="left:0px;top:329px;width:1px;height:17px;background:#fff"></div>
<div class="a" style="left:0px;top:345px;width:45px;height:1px;background:#404040"></div>
<div class="a" style="left:44px;top:329px;width:1px;height:17px;background:#404040"></div>
<span class="a t" style="left:2.3000000000000007px;top:332.19px;font-size:10.6px;line-height:10.6px;color:#111">4293</span>
<span class="a t" style="left:48.0px;top:332.10px;font-size:10.7px;line-height:10.7px;color:#111">202301-LM0002</span>
<span class="a t" style="left:153.0px;top:332.10px;font-size:10.7px;line-height:10.7px;color:#111"></span>
<span class="a t" style="left:265.0px;top:332.10px;font-size:10.7px;line-height:10.7px;color:#111">RA-77777</span>
<span class="a t" style="left:333.0px;top:332.10px;font-size:10.7px;line-height:10.7px;color:#111">B737-800</span>
<span class="a t" style="left:413.9px;top:332.10px;font-size:10.7px;line-height:10.7px;color:#111">32658</span>
<div class="a" style="left:45px;top:345px;width:388px;height:1px;background:#D4D4D4"></div>
<div class="a" style="left:0px;top:346px;width:45px;height:16px;background:#D6D3CE"></div>
<div class="a" style="left:0px;top:346px;width:44px;height:1px;background:#fff"></div>
<div class="a" style="left:0px;top:346px;width:1px;height:16px;background:#fff"></div>
<div class="a" style="left:0px;top:361px;width:45px;height:1px;background:#404040"></div>
<div class="a" style="left:44px;top:346px;width:1px;height:16px;background:#404040"></div>
<span class="a t" style="left:2.3000000000000007px;top:348.63px;font-size:10.6px;line-height:10.6px;color:#111">4292</span>
<span class="a t" style="left:48.0px;top:348.54px;font-size:10.7px;line-height:10.7px;color:#111">202301-LM0001</span>
<span class="a t" style="left:153.0px;top:348.54px;font-size:10.7px;line-height:10.7px;color:#111"></span>
<span class="a t" style="left:265.0px;top:348.54px;font-size:10.7px;line-height:10.7px;color:#111">RA-77777</span>
<span class="a t" style="left:333.0px;top:348.54px;font-size:10.7px;line-height:10.7px;color:#111">B737-800</span>
<span class="a t" style="left:413.9px;top:348.54px;font-size:10.7px;line-height:10.7px;color:#111">32658</span>
<div class="a" style="left:45px;top:361px;width:388px;height:1px;background:#D4D4D4"></div>
<div class="a" style="left:0px;top:362px;width:45px;height:17px;background:#D6D3CE"></div>
<div class="a" style="left:0px;top:362px;width:44px;height:1px;background:#fff"></div>
<div class="a" style="left:0px;top:362px;width:1px;height:17px;background:#fff"></div>
<div class="a" style="left:0px;top:378px;width:45px;height:1px;background:#404040"></div>
<div class="a" style="left:44px;top:362px;width:1px;height:17px;background:#404040"></div>
<span class="a t" style="left:2.3000000000000007px;top:365.07px;font-size:10.6px;line-height:10.6px;color:#111">4291</span>
<span class="a t" style="left:48.0px;top:364.98px;font-size:10.7px;line-height:10.7px;color:#111">202212-LM0009</span>
<span class="a t" style="left:153.0px;top:364.98px;font-size:10.7px;line-height:10.7px;color:#111"></span>
<span class="a t" style="left:265.0px;top:364.98px;font-size:10.7px;line-height:10.7px;color:#111">EI-GXO</span>
<span class="a t" style="left:333.0px;top:364.98px;font-size:10.7px;line-height:10.7px;color:#111">B737-800</span>
<span class="a t" style="left:413.9px;top:364.98px;font-size:10.7px;line-height:10.7px;color:#111">36589</span>
<div class="a" style="left:45px;top:378px;width:388px;height:1px;background:#D4D4D4"></div>
<div class="a" style="left:0px;top:379px;width:45px;height:16px;background:#D6D3CE"></div>
<div class="a" style="left:0px;top:379px;width:44px;height:1px;background:#fff"></div>
<div class="a" style="left:0px;top:379px;width:1px;height:16px;background:#fff"></div>
<div class="a" style="left:0px;top:394px;width:45px;height:1px;background:#404040"></div>
<div class="a" style="left:44px;top:379px;width:1px;height:16px;background:#404040"></div>
<span class="a t" style="left:2.3000000000000007px;top:381.51px;font-size:10.6px;line-height:10.6px;color:#111">4290</span>
<span class="a t" style="left:48.0px;top:381.42px;font-size:10.7px;line-height:10.7px;color:#111">202212-LM0008</span>
<span class="a t" style="left:153.0px;top:381.42px;font-size:10.7px;line-height:10.7px;color:#111">123-TEST-TASK</span>
<span class="a t" style="left:265.0px;top:381.42px;font-size:10.7px;line-height:10.7px;color:#111">RA-00003</span>
<span class="a t" style="left:333.0px;top:381.42px;font-size:10.7px;line-height:10.7px;color:#111">B737-800</span>
<span class="a t" style="left:413.9px;top:381.42px;font-size:10.7px;line-height:10.7px;color:#111">32558</span>
<div class="a" style="left:45px;top:394px;width:388px;height:1px;background:#D4D4D4"></div>
<div class="a" style="left:0px;top:395px;width:45px;height:17px;background:#D6D3CE"></div>
<div class="a" style="left:0px;top:395px;width:44px;height:1px;background:#fff"></div>
<div class="a" style="left:0px;top:395px;width:1px;height:17px;background:#fff"></div>
<div class="a" style="left:0px;top:411px;width:45px;height:1px;background:#404040"></div>
<div class="a" style="left:44px;top:395px;width:1px;height:17px;background:#404040"></div>
<span class="a t" style="left:2.3000000000000007px;top:397.95px;font-size:10.6px;line-height:10.6px;color:#111">4289</span>
<span class="a t" style="left:48.0px;top:397.86px;font-size:10.7px;line-height:10.7px;color:#111">202212-LM0007</span>
<span class="a t" style="left:153.0px;top:397.86px;font-size:10.7px;line-height:10.7px;color:#111">121231234</span>
<span class="a t" style="left:265.0px;top:397.86px;font-size:10.7px;line-height:10.7px;color:#111">RA-00002</span>
<span class="a t" style="left:333.0px;top:397.86px;font-size:10.7px;line-height:10.7px;color:#111">B737-800</span>
<span class="a t" style="left:413.9px;top:397.86px;font-size:10.7px;line-height:10.7px;color:#111">32658</span>
<div class="a" style="left:45px;top:411px;width:388px;height:1px;background:#D4D4D4"></div>
<div class="a" style="left:0px;top:412px;width:45px;height:16px;background:#D6D3CE"></div>
<div class="a" style="left:0px;top:412px;width:44px;height:1px;background:#fff"></div>
<div class="a" style="left:0px;top:412px;width:1px;height:16px;background:#fff"></div>
<div class="a" style="left:0px;top:427px;width:45px;height:1px;background:#404040"></div>
<div class="a" style="left:44px;top:412px;width:1px;height:16px;background:#404040"></div>
<span class="a t" style="left:2.3000000000000007px;top:414.39px;font-size:10.6px;line-height:10.6px;color:#111">4285</span>
<span class="a t" style="left:48.0px;top:414.30px;font-size:10.7px;line-height:10.7px;color:#111">202212-LM0004</span>
<span class="a t" style="left:153.0px;top:414.30px;font-size:10.7px;line-height:10.7px;color:#111"></span>
<span class="a t" style="left:265.0px;top:414.30px;font-size:10.7px;line-height:10.7px;color:#111">EI-GXO</span>
<span class="a t" style="left:333.0px;top:414.30px;font-size:10.7px;line-height:10.7px;color:#111">B737-800</span>
<span class="a t" style="left:413.9px;top:414.30px;font-size:10.7px;line-height:10.7px;color:#111">36589</span>
<div class="a" style="left:45px;top:427px;width:388px;height:1px;background:#D4D4D4"></div>
<div class="a" style="left:0px;top:428px;width:45px;height:16px;background:#D6D3CE"></div>
<div class="a" style="left:0px;top:428px;width:44px;height:1px;background:#fff"></div>
<div class="a" style="left:0px;top:428px;width:1px;height:16px;background:#fff"></div>
<div class="a" style="left:0px;top:443px;width:45px;height:1px;background:#404040"></div>
<div class="a" style="left:44px;top:428px;width:1px;height:16px;background:#404040"></div>
<span class="a t" style="left:2.3000000000000007px;top:430.83px;font-size:10.6px;line-height:10.6px;color:#111">4284</span>
<span class="a t" style="left:48.0px;top:430.74px;font-size:10.7px;line-height:10.7px;color:#111">202212-LM0003</span>
<span class="a t" style="left:153.0px;top:430.74px;font-size:10.7px;line-height:10.7px;color:#111"></span>
<span class="a t" style="left:265.0px;top:430.74px;font-size:10.7px;line-height:10.7px;color:#111">EI-GXO</span>
<span class="a t" style="left:333.0px;top:430.74px;font-size:10.7px;line-height:10.7px;color:#111">B737-800</span>
<span class="a t" style="left:413.9px;top:430.74px;font-size:10.7px;line-height:10.7px;color:#111">36589</span>
<div class="a" style="left:45px;top:443px;width:388px;height:1px;background:#D4D4D4"></div>
<div class="a" style="left:0px;top:444px;width:45px;height:17px;background:#D6D3CE"></div>
<div class="a" style="left:0px;top:444px;width:44px;height:1px;background:#fff"></div>
<div class="a" style="left:0px;top:444px;width:1px;height:17px;background:#fff"></div>
<div class="a" style="left:0px;top:460px;width:45px;height:1px;background:#404040"></div>
<div class="a" style="left:44px;top:444px;width:1px;height:17px;background:#404040"></div>
<span class="a t" style="left:2.3000000000000007px;top:447.27px;font-size:10.6px;line-height:10.6px;color:#111">3783</span>
<span class="a t" style="left:48.0px;top:447.18px;font-size:10.7px;line-height:10.7px;color:#111">202211-LM0002</span>
<span class="a t" style="left:153.0px;top:447.18px;font-size:10.7px;line-height:10.7px;color:#111"></span>
<span class="a t" style="left:265.0px;top:447.18px;font-size:10.7px;line-height:10.7px;color:#111">RA-00001</span>
<span class="a t" style="left:333.0px;top:447.18px;font-size:10.7px;line-height:10.7px;color:#111">B737-800</span>
<span class="a t" style="left:413.9px;top:447.18px;font-size:10.7px;line-height:10.7px;color:#111">32558</span>
<div class="a" style="left:45px;top:460px;width:388px;height:1px;background:#D4D4D4"></div>
<div class="a" style="left:149px;top:17px;width:1px;height:440px;background:#D4D4D4"></div>
<div class="a" style="left:261px;top:17px;width:1px;height:440px;background:#D4D4D4"></div>
<div class="a" style="left:329px;top:17px;width:1px;height:440px;background:#D4D4D4"></div>
<div class="a" style="left:411px;top:17px;width:1px;height:440px;background:#D4D4D4"></div>
</div>
<div class="a" style="left:459px;top:125px;width:14px;height:452px;background:#E9E7E2;"></div>
<div class="a" style="left:28px;top:577px;width:431px;height:14px;background:#E9E7E2;"></div>
<div class="a" style="left:459px;top:577px;width:14px;height:14px;background:#D6D3CE"></div>
<div class="a" style="left:459px;top:125px;width:14px;height:13px;background:#D6D3CE;box-sizing:border-box;border:1px solid;border-color:#fff #404040 #404040 #fff;box-shadow:inset -1px -1px 0 #808080"></div>
<svg class="a" style="left:0;top:0" width="1176" height="629"><path d="M462.5 133.0h7L466.0 129.0z" fill="#000"/></svg>
<div class="a" style="left:459px;top:138px;width:14px;height:14px;background:#D6D3CE;box-sizing:border-box;border:1px solid;border-color:#fff #404040 #404040 #fff;box-shadow:inset -1px -1px 0 #808080"></div>
<div class="a" style="left:459px;top:563px;width:14px;height:14px;background:#D6D3CE;box-sizing:border-box;border:1px solid;border-color:#fff #404040 #404040 #fff;box-shadow:inset -1px -1px 0 #808080"></div>
<svg class="a" style="left:0;top:0" width="1176" height="629"><path d="M462.5 568.5h7L466.0 572.5z" fill="#000"/></svg>
<div class="a" style="left:28px;top:577px;width:13px;height:14px;background:#D6D3CE;box-sizing:border-box;border:1px solid;border-color:#fff #404040 #404040 #fff;box-shadow:inset -1px -1px 0 #808080"></div>
<svg class="a" style="left:0;top:0" width="1176" height="629"><path d="M36.0 580.5v7L32.0 584.0z" fill="#000"/></svg>
<div class="a" style="left:41px;top:577px;width:14px;height:14px;background:#D6D3CE;box-sizing:border-box;border:1px solid;border-color:#fff #404040 #404040 #fff;box-shadow:inset -1px -1px 0 #808080"></div>
<div class="a" style="left:445px;top:577px;width:14px;height:14px;background:#D6D3CE;box-sizing:border-box;border:1px solid;border-color:#fff #404040 #404040 #fff;box-shadow:inset -1px -1px 0 #808080"></div>
<svg class="a" style="left:0;top:0" width="1176" height="629"><path d="M450.5 580.5v7L454.5 584.0z" fill="#000"/></svg>
<div class="a" style="left:25px;top:594px;width:175px;height:13px;background:#D6D3CE;box-sizing:border-box;border:1px solid;border-color:#9A9894 #fff #fff #9A9894"></div>
<span class="a t" style="letter-spacing:-0.009px;top:595.94px;font-size:9.4px;line-height:9.4px;color:#111;left:28.4px;">Found 31 Work Orders</span>
<span class="a t" style="letter-spacing:-0.292px;top:142.26px;font-size:13.75px;line-height:13.75px;color:#3838C8;left:530px;">Select:</span>
<span class="a t" style="letter-spacing:-0.387px;top:142.26px;font-size:13.75px;line-height:13.75px;color:#3a3a3a;left:659px;">A/C Reg:</span>
<span class="a t" style="letter-spacing:-0.347px;top:142.26px;font-size:13.75px;line-height:13.75px;color:#3a3a3a;left:781px;">A/C Type:</span>
<span class="a t" style="letter-spacing:-0.152px;top:142.26px;font-size:13.75px;line-height:13.75px;color:#3a3a3a;left:909px;">A/C Serial No:</span>
<span class="a t" style="letter-spacing:-0.509px;top:142.36px;font-size:13.75px;line-height:13.75px;color:#3a3a3a;left:1060px;">Authority:</span>
<span class="a t" style="top:143.27px;font-size:11.5px;line-height:11.5px;color:#E03040;left:733px;transform:translateX(-50%);">*</span>
<span class="a t" style="top:143.27px;font-size:11.5px;line-height:11.5px;color:#E03040;left:853px;transform:translateX(-50%);">*</span>
<span class="a t" style="top:143.27px;font-size:11.5px;line-height:11.5px;color:#E03040;left:1006px;transform:translateX(-50%);">*</span>
<span class="a t" style="top:143.27px;font-size:11.5px;line-height:11.5px;color:#E03040;left:1135px;transform:translateX(-50%);">*</span>
<div class="a" style="left:497px;top:87px;width:497px;height:59px;background:#D6D3CE;box-sizing:border-box;border:1px solid;border-color:#fff #8E8C88 #8E8C88 #fff"></div>
<div class="a" style="left:498px;top:110px;width:494px;height:1px;background:#9C9A96"></div>
<div class="a" style="left:498px;top:111px;width:494px;height:1px;background:#F6F5F2"></div>
<div class="a" style="left:500px;top:90px;width:1px;height:15px;background:#A8A6A0"></div>
<div class="a" style="left:501px;top:90px;width:1px;height:15px;background:#F8F7F4"></div>
<div class="a" style="left:563px;top:90px;width:1px;height:15px;background:#A8A6A0"></div>
<div class="a" style="left:564px;top:90px;width:1px;height:15px;background:#F8F7F4"></div>
<div class="a" style="left:570px;top:90px;width:1px;height:15px;background:#A8A6A0"></div>
<div class="a" style="left:571px;top:90px;width:1px;height:15px;background:#F8F7F4"></div>
<div class="a" style="left:634px;top:90px;width:1px;height:15px;background:#A8A6A0"></div>
<div class="a" style="left:635px;top:90px;width:1px;height:15px;background:#F8F7F4"></div>
<div class="a" style="left:697px;top:90px;width:1px;height:15px;background:#A8A6A0"></div>
<div class="a" style="left:698px;top:90px;width:1px;height:15px;background:#F8F7F4"></div>
<div class="a" style="left:704px;top:90px;width:1px;height:15px;background:#A8A6A0"></div>
<div class="a" style="left:705px;top:90px;width:1px;height:15px;background:#F8F7F4"></div>
<div class="a" style="left:767px;top:90px;width:1px;height:15px;background:#A8A6A0"></div>
<div class="a" style="left:768px;top:90px;width:1px;height:15px;background:#F8F7F4"></div>
<div class="a" style="left:830px;top:90px;width:1px;height:15px;background:#A8A6A0"></div>
<div class="a" style="left:831px;top:90px;width:1px;height:15px;background:#F8F7F4"></div>
<div class="a" style="left:893px;top:90px;width:1px;height:15px;background:#A8A6A0"></div>
<div class="a" style="left:894px;top:90px;width:1px;height:15px;background:#F8F7F4"></div>
<div class="a" style="left:956px;top:90px;width:1px;height:15px;background:#A8A6A0"></div>
<div class="a" style="left:957px;top:90px;width:1px;height:15px;background:#F8F7F4"></div>
<span class="a t" style="letter-spacing:0.134px;top:93.43px;font-size:9.3px;line-height:9.3px;color:#111;left:524.5px;">Refresh</span>
<span class="a t" style="letter-spacing:-0.016px;top:93.43px;font-size:9.3px;line-height:9.3px;color:#111;left:611.5px;">Add</span>
<span class="a t" style="letter-spacing:0.169px;top:94.23px;font-size:9.3px;line-height:9.3px;color:#fff;left:660.8px;">Update</span>
<span class="a t" style="letter-spacing:0.169px;top:93.43px;font-size:9.3px;line-height:9.3px;color:#9A968C;left:660px;">Update</span>
<span class="a t" style="letter-spacing:-0.062px;top:94.23px;font-size:9.3px;line-height:9.3px;color:#fff;left:735.3px;">Delete</span>
<span class="a t" style="letter-spacing:-0.062px;top:93.43px;font-size:9.3px;line-height:9.3px;color:#9A968C;left:734.5px;">Delete</span>
<span class="a t" style="letter-spacing:-0.356px;top:94.23px;font-size:9.3px;line-height:9.3px;color:#fff;left:802.8px;">Close</span>
<span class="a t" style="letter-spacing:-0.356px;top:93.43px;font-size:9.3px;line-height:9.3px;color:#9A968C;left:802px;">Close</span>
<span class="a t" style="letter-spacing:-0.188px;top:94.23px;font-size:9.3px;line-height:9.3px;color:#fff;left:865.8px;">Open</span>
<span class="a t" style="letter-spacing:-0.188px;top:93.43px;font-size:9.3px;line-height:9.3px;color:#9A968C;left:865px;">Open</span>
<span class="a t" style="letter-spacing:-0.076px;top:94.23px;font-size:9.3px;line-height:9.3px;color:#fff;left:920.8px;">A Stock</span>
<span class="a t" style="letter-spacing:-0.076px;top:93.43px;font-size:9.3px;line-height:9.3px;color:#9A968C;left:920px;">A Stock</span>
<svg class="a" style="left:509px;top:91px" width="14" height="13" viewBox="0 0 14 13">
<path d="M4 4h5.2a2.6 2.6 0 0 1 0 6.2H5.6v-2.4H9" fill="none" stroke="#0B5A0B" stroke-width="2.7"/>
<path d="M4 4h5.2a2.6 2.6 0 0 1 0 6.2H5.6v-2.4H9" fill="none" stroke="#38D838" stroke-width="1.3"/>
<path d="M5 1.6L1.6 4l3.4 2.4z" fill="#1FA81F" stroke="#0B5A0B" stroke-width="0.7"/></svg>
<svg class="a" style="left:578px;top:90px" width="16" height="16" viewBox="0 0 16 16">
<path d="M4.6 3.6h3.2l3.4 3.2v6H4.6z" fill="#30E4E4" stroke="#0A6060" stroke-width="0.8"/>
<path d="M7.4 1.6l3.8 5.2H7.4z" fill="#1a1a1a"/>
<path d="M3 2.6l.8.8M12.6 2.2l-.8.8M2 7.6h1M12.6 7h1M3 14l.9-.9M12.8 14l-.9-.9M7 14.6h1" stroke="#111" stroke-width="0.9"/></svg>
<svg class="a" style="left:642px;top:91px" width="15" height="14" viewBox="0 0 15 14">
<rect x="1" y="1" width="4.5" height="5" fill="#8C8890"/><rect x="2.2" y="2.2" width="1.6" height="1.6" fill="#D6D3CE"/>
<path d="M7 2.5h3v2.5l2-1.5M10 5v2l2 1" stroke="#8C8890" stroke-width="1.2" fill="none"/>
<rect x="5.5" y="9" width="7" height="3.5" fill="#eee" stroke="#8C8890" stroke-width="1.1"/></svg>
<div class="a" style="left:712px;top:91px;width:13px;height:13px;background:#8A878E"></div>
<div class="a" style="left:716px;top:94px;width:1.4px;height:9px;background:#D6D3CE"></div>
<div class="a" style="left:716px;top:91.8px;width:1.4px;height:1.4px;background:#D6D3CE"></div>
<svg class="a" style="left:774px;top:90px" width="16" height="16" viewBox="0 0 16 16">
<path d="M2 1.5l5 5M14 1.5L9 6.5M2 14.5l5-5.5M14 14.5L9 9" stroke="#8C8890" stroke-width="1" fill="none"/>
<path d="M8 1v14M2 7.5h12" stroke="#8C8890" stroke-width="2.6" stroke-linecap="round" fill="none"/>
<path d="M8 1.4v5M3 7.5h3.5M9.5 7.5H13" stroke="#E4E2DE" stroke-width="0.9" fill="none"/></svg>
<svg class="a" style="left:837px;top:90px" width="16" height="16" viewBox="0 0 16 16">
<path d="M8.5 1.5v11M2 6.5h13" stroke="#8C8890" stroke-width="2.6" stroke-linecap="round" fill="none"/>
<path d="M8.5 2v10M3 6.5h4M10 6.5h4" stroke="#E4E2DE" stroke-width="0.9" fill="none"/>
<path d="M3 8v2.5h3.5M14 8l-2.5 3M8.5 12.5l1.6 2" stroke="#8C8890" stroke-width="1" fill="none"/></svg>
<svg class="a" style="left:901px;top:91px" width="16" height="14" viewBox="0 0 16 14">
<circle cx="9.5" cy="6" r="5" fill="#8C8890"/><rect x="1" y="6.5" width="4" height="4" fill="#8C8890"/>
<path d="M5 9h6" stroke="#8C8890" stroke-width="2"/><path d="M7 7c1.5 1 3 .5 3.5-1" stroke="#D6D3CE" stroke-width="1" fill="none"/></svg>
<div class="a" style="left:502px;top:116.5px;width:10px;height:1.6px;background:#2828B8"></div>
<div class="a" style="left:497px;top:122px;width:11px;height:11px;background:#fff;box-sizing:border-box;border:1px solid;border-color:#808080 #fff #fff #808080;box-shadow:inset 1px 1px 0 #404040,inset -1px -1px 0 #D6D3CE"></div>
<svg class="a" style="left:499px;top:124px" width="8" height="7" viewBox="0 0 8 7"><path d="M0.7 2.6l2.2 2.4L7.3 0.6" fill="none" stroke="#000" stroke-width="1.7"/></svg>
<span class="a t" style="letter-spacing:-0.049px;top:120.84px;font-size:13.3px;line-height:13.3px;color:#3a3a3a;left:514px;">:Activate WO</span>
<div class="a" style="left:803px;top:114px;width:178px;height:24px;background:#FFFFC0;box-sizing:border-box;border:1px solid;border-color:#202020 #808080 #808080 #202020"></div>
<div class="a" style="left:998px;top:87px;width:167px;height:27px;background:#E6E4EE;box-sizing:border-box;border:1px solid #111"></div>
<span class="a t" style="letter-spacing:0.042px;top:90.89px;font-size:16.9px;line-height:16.9px;color:#0000C0;font-weight:bold;left:1081px;transform:translateX(-50%);">202403-LM0002</span>
<div class="a" style="left:497px;top:158px;width:119px;height:24px;background:#C8C7CC;box-sizing:border-box;border:1px solid;border-color:#808080 #fff #fff #808080;box-shadow:inset 1px 1px 0 #404040,inset -1px -1px 0 #D6D3CE"></div>
<div class="a" style="left:601px;top:160px;width:13px;height:20px;background:#D6D3CE;box-sizing:border-box;border:1px solid;border-color:#fff #404040 #404040 #fff;box-shadow:inset -1px -1px 0 #808080"></div>
<svg class="a" style="left:604.0px;top:168.4px" width="7" height="3.6" viewBox="0 0 7 3.6"><path d="M0.2 0h6.6L3.5 3.6z" fill="#000"/></svg>
<span class="a t" style="letter-spacing:0.045px;top:162.20px;font-size:13.7px;line-height:13.7px;color:#000;left:500px;-webkit-text-stroke:0.35px #000;">RA-00002</span>
<div class="a" style="left:627px;top:158px;width:119px;height:24px;background:#fff;box-sizing:border-box;border:1px solid #202020"></div>
<span class="a t" style="top:161.49px;font-size:13.6px;line-height:13.6px;color:#0000A8;font-weight:bold;left:686px;transform:translateX(-50%);">RA-00002</span>
<div class="a" style="left:750px;top:158px;width:132px;height:24px;background:#fff;box-sizing:border-box;border:1px solid #202020"></div>
<span class="a t" style="top:161.49px;font-size:13.6px;line-height:13.6px;color:#0000A8;font-weight:bold;left:816px;transform:translateX(-50%);">B737-800</span>
<div class="a" style="left:886px;top:158px;width:132px;height:24px;background:#fff;box-sizing:border-box;border:1px solid #202020"></div>
<span class="a t" style="top:161.49px;font-size:13.6px;line-height:13.6px;color:#0000A8;font-weight:bold;left:951.5px;transform:translateX(-50%);">32658</span>
<div class="a" style="left:1027px;top:158px;width:132px;height:24px;background:#fff;box-sizing:border-box;border:1px solid;border-color:#808080 #fff #fff #808080;box-shadow:inset 1px 1px 0 #404040,inset -1px -1px 0 #D6D3CE"></div>
<div class="a" style="left:1144px;top:160px;width:13px;height:20px;background:#D6D3CE;box-sizing:border-box;border:1px solid;border-color:#fff #404040 #404040 #fff;box-shadow:inset -1px -1px 0 #808080"></div>
<svg class="a" style="left:1147.0px;top:168.4px" width="7" height="3.6" viewBox="0 0 7 3.6"><path d="M0.2 0h6.6L3.5 3.6z" fill="#000"/></svg>
<span class="a t" style="top:162.09px;font-size:13.6px;line-height:13.6px;color:#0000A8;font-weight:bold;left:1031px;">EASA</span>
<div class="a" style="left:497px;top:192px;width:662px;height:135px;box-sizing:border-box;border:1px solid #969490"></div>
<div class="a" style="left:498px;top:193px;width:662px;height:135px;box-sizing:border-box;border:1px solid #fff;border-right-color:#fff;border-bottom-color:#fff;clip-path:polygon(0 0,calc(100% - 2px) 0,calc(100% - 2px) 1px,1px 1px,1px calc(100% - 2px),0 calc(100% - 2px),0 0, 100% 0, 100% 100%, 0 100%, 0 calc(100% - 1px), calc(100% - 1px) calc(100% - 1px), calc(100% - 1px) 0)"></div>
<div class="a" style="left:503.3px;top:186px;width:59px;height:12px;background:#D6D3CE"></div>
<span class="a t" style="letter-spacing:-0.280px;top:187.17px;font-size:11.5px;line-height:11.5px;color:#00008B;font-weight:bold;left:505.3px;">Customer:</span>
<span class="a t" style="letter-spacing:-0.280px;top:202.86px;font-size:13.75px;line-height:13.75px;color:#3a3a3a;left:521px;">Customer Name:</span>
<span class="a t" style="top:204.27px;font-size:11.5px;line-height:11.5px;color:#E03040;left:652px;transform:translateX(-50%);">*</span>
<span class="a t" style="letter-spacing:-0.235px;top:202.86px;font-size:13.75px;line-height:13.75px;color:#3a3a3a;left:963px;">Customer WO Reference:</span>
<span class="a t" style="top:204.27px;font-size:11.5px;line-height:11.5px;color:#E03040;left:1143px;transform:translateX(-50%);">*</span>
<div class="a" style="left:509px;top:220px;width:414px;height:21px;background:#fff;box-sizing:border-box;border:1px solid #202020"></div>
<span class="a t" style="top:224.29px;font-size:13.6px;line-height:13.6px;color:#0000A8;font-weight:bold;left:511px;">AIR Bulgaria</span>
<div class="a" style="left:934px;top:220px;width:213px;height:21px;background:#fff;box-sizing:border-box;border:1px solid #202020"></div>
<span class="a t" style="top:224.29px;font-size:13.6px;line-height:13.6px;color:#0000A8;font-weight:bold;left:991.4px;">AB-01022020-1</span>
<span class="a t" style="letter-spacing:-0.159px;top:248.56px;font-size:13.75px;line-height:13.75px;color:#3a3a3a;left:521px;">Customer Contact Details:</span>
<div class="a" style="left:509px;top:264px;width:625px;height:57px;background:#fff;box-sizing:border-box;border:1px solid #202020"></div>
<div class="a" style="left:1134px;top:264px;width:14px;height:57px;background:#E9E7E2;"></div>
<div class="a" style="left:1134px;top:264px;width:14px;height:13px;background:#D6D3CE;box-sizing:border-box;border:1px solid;border-color:#fff #707070 #707070 #fff;box-shadow:inset -1px -1px 0 #A8A6A0"></div>
<svg class="a" style="left:0;top:0" width="1176" height="629"><path d="M1137.5 272.0h7L1141.0 268.0z" fill="#8C8A86"/></svg>
<div class="a" style="left:1134px;top:308px;width:14px;height:13px;background:#D6D3CE;box-sizing:border-box;border:1px solid;border-color:#fff #707070 #707070 #fff;box-shadow:inset -1px -1px 0 #A8A6A0"></div>
<svg class="a" style="left:0;top:0" width="1176" height="629"><path d="M1137.5 313.0h7L1141.0 317.0z" fill="#8C8A86"/></svg>
<span class="a t" style="letter-spacing:-0.017px;top:268.19px;font-size:13.6px;line-height:13.6px;color:#0000A8;font-weight:bold;left:511px;">Bulgaria, Jornal street,12</span>
<div class="a" style="left:497px;top:342px;width:662px;height:109px;box-sizing:border-box;border:1px solid #969490"></div>
<div class="a" style="left:498px;top:343px;width:662px;height:109px;box-sizing:border-box;border:1px solid #fff;border-right-color:#fff;border-bottom-color:#fff;clip-path:polygon(0 0,calc(100% - 2px) 0,calc(100% - 2px) 1px,1px 1px,1px calc(100% - 2px),0 calc(100% - 2px),0 0, 100% 0, 100% 100%, 0 100%, 0 calc(100% - 1px), calc(100% - 1px) calc(100% - 1px), calc(100% - 1px) 0)"></div>
<div class="a" style="left:503px;top:336px;width:104.7px;height:12px;background:#D6D3CE"></div>
<span class="a t" style="letter-spacing:-0.084px;top:337.27px;font-size:11.5px;line-height:11.5px;color:#00008B;font-weight:bold;left:505px;">Action to be Done:</span>
<span class="a t" style="letter-spacing:-0.146px;top:354.56px;font-size:13.75px;line-height:13.75px;color:#3a3a3a;left:509.8px;">Basic Work / Title:</span>
<span class="a t" style="top:355.27px;font-size:11.5px;line-height:11.5px;color:#E03040;left:652px;transform:translateX(-50%);">*</span>
<div class="a" style="left:509px;top:371px;width:625px;height:75px;background:#fff;box-sizing:border-box;border:1px solid #202020"></div>
<div class="a" style="left:1134px;top:371px;width:14px;height:75px;background:#E9E7E2;"></div>
<div class="a" style="left:1134px;top:371px;width:14px;height:13px;background:#D6D3CE;box-sizing:border-box;border:1px solid;border-color:#fff #707070 #707070 #fff;box-shadow:inset -1px -1px 0 #A8A6A0"></div>
<svg class="a" style="left:0;top:0" width="1176" height="629"><path d="M1137.5 379.0h7L1141.0 375.0z" fill="#8C8A86"/></svg>
<div class="a" style="left:1134px;top:433px;width:14px;height:13px;background:#D6D3CE;box-sizing:border-box;border:1px solid;border-color:#fff #707070 #707070 #fff;box-shadow:inset -1px -1px 0 #A8A6A0"></div>
<svg class="a" style="left:0;top:0" width="1176" height="629"><path d="M1137.5 438.0h7L1141.0 442.0z" fill="#8C8A86"/></svg>
<span class="a t" style="top:374.09px;font-size:13.6px;line-height:13.6px;color:#0000A8;font-weight:bold;left:511px;">Perform wheel replacement after FL#AB1624</span>
<span class="a t" style="letter-spacing:-0.212px;top:461.66px;font-size:13.75px;line-height:13.75px;color:#3a3a3a;left:530.6px;">STA:</span>
<span class="a t" style="top:462.27px;font-size:11.5px;line-height:11.5px;color:#E03040;left:569px;transform:translateX(-50%);">*</span>
<span class="a t" style="letter-spacing:-0.257px;top:461.66px;font-size:13.75px;line-height:13.75px;color:#3a3a3a;left:626.7px;">WO Date:</span>
<span class="a t" style="top:462.27px;font-size:11.5px;line-height:11.5px;color:#E03040;left:700px;transform:translateX(-50%);">*</span>
<span class="a t" style="letter-spacing:-0.264px;top:461.66px;font-size:13.75px;line-height:13.75px;color:#3a3a3a;left:778.7px;">Originator:</span>
<span class="a t" style="top:462.27px;font-size:11.5px;line-height:11.5px;color:#E03040;left:853px;transform:translateX(-50%);">*</span>
<div class="a" style="left:709px;top:454px;width:37px;height:22px;background:#C8C8FA;box-sizing:border-box;border:1px solid;border-color:#fff #585858 #585858 #fff"></div>
<svg class="a" style="left:720px;top:457px" width="14" height="13" viewBox="0 0 14 13">
<rect x="0.5" y="0.5" width="13" height="12" fill="#fff" stroke="#181878" stroke-width="1"/>
<rect x="0.5" y="0.5" width="13" height="3" fill="#181878"/>
<path d="M1 6h12M1 8.5h12M1 11h12" stroke="#B04040" stroke-width="0.8"/>
<path d="M4 4v8M7 4v8M10 4v8" stroke="#404080" stroke-width="0.8"/></svg>
<div class="a" style="left:497px;top:478px;width:107px;height:23px;background:#fff;box-sizing:border-box;border:1px solid;border-color:#808080 #fff #fff #808080;box-shadow:inset 1px 1px 0 #404040,inset -1px -1px 0 #D6D3CE"></div>
<div class="a" style="left:589px;top:480px;width:13px;height:19px;background:#D6D3CE;box-sizing:border-box;border:1px solid;border-color:#fff #404040 #404040 #fff;box-shadow:inset -1px -1px 0 #808080"></div>
<svg class="a" style="left:592.0px;top:487.9px" width="7" height="3.6" viewBox="0 0 7 3.6"><path d="M0.2 0h6.6L3.5 3.6z" fill="#000"/></svg>
<span class="a t" style="letter-spacing:-0.048px;top:481.44px;font-size:13.3px;line-height:13.3px;color:#0000A8;font-weight:bold;left:500.3px;">OSL</span>
<div class="a" style="left:615px;top:477px;width:131px;height:24px;background:#C8C7CC;box-sizing:border-box;border:1px solid #202020"></div>
<span class="a t" style="letter-spacing:-0.074px;top:480.75px;font-size:16.6px;line-height:16.6px;color:#0000C8;font-weight:bold;left:680.2px;transform:translateX(-50%);">11/03/2024</span>
<div class="a" style="left:757px;top:478px;width:107px;height:23px;background:#fff;box-sizing:border-box;border:1px solid;border-color:#808080 #fff #fff #808080;box-shadow:inset 1px 1px 0 #404040,inset -1px -1px 0 #D6D3CE"></div>
<div class="a" style="left:849px;top:480px;width:13px;height:19px;background:#D6D3CE;box-sizing:border-box;border:1px solid;border-color:#fff #404040 #404040 #fff;box-shadow:inset -1px -1px 0 #808080"></div>
<svg class="a" style="left:852.0px;top:487.9px" width="7" height="3.6" viewBox="0 0 7 3.6"><path d="M0.2 0h6.6L3.5 3.6z" fill="#000"/></svg>
<div class="a" style="left:759px;top:480px;width:25px;height:17px;background:#0A246A"></div>
<span class="a t" style="top:481.44px;font-size:13.3px;line-height:13.3px;color:#fff;font-weight:bold;left:760px;">TLT</span>
<div class="a" style="left:874px;top:477px;width:285px;height:24px;background:#C8C7CC;box-sizing:border-box;border:1px solid #202020"></div>
<span class="a t" style="letter-spacing:-0.108px;top:480.75px;font-size:16.6px;line-height:16.6px;color:#0000C8;font-weight:bold;left:1016.3px;transform:translateX(-50%);">TALVAR TARI</span>
<span class="a t" style="letter-spacing:-0.291px;top:514.66px;font-size:13.75px;line-height:13.75px;color:#3a3a3a;left:508.5px;">Remarks:</span>
<div class="a" style="left:497px;top:530px;width:649px;height:92px;background:#fff;box-sizing:border-box;border:1px solid #202020"></div>
<div class="a" style="left:1146px;top:530px;width:14px;height:92px;background:#E9E7E2;"></div>
<div class="a" style="left:1146px;top:530px;width:14px;height:13px;background:#D6D3CE;box-sizing:border-box;border:1px solid;border-color:#fff #707070 #707070 #fff;box-shadow:inset -1px -1px 0 #A8A6A0"></div>
<svg class="a" style="left:0;top:0" width="1176" height="629"><path d="M1149.5 538.0h7L1153.0 534.0z" fill="#8C8A86"/></svg>
<div class="a" style="left:1146px;top:609px;width:14px;height:13px;background:#D6D3CE;box-sizing:border-box;border:1px solid;border-color:#fff #707070 #707070 #fff;box-shadow:inset -1px -1px 0 #A8A6A0"></div>
<svg class="a" style="left:0;top:0" width="1176" height="629"><path d="M1149.5 614.0h7L1153.0 618.0z" fill="#8C8A86"/></svg>
<svg class="a" style="left:0;top:0" width="1176" height="629" viewBox="0 0 1176 629">
<path d="M1145.4 164.6L1072.5 247L1098.5 262z" fill="#1496FA"/>
<circle cx="1084.1" cy="256" r="17.4" fill="#2c3238"/>
<circle cx="1084.1" cy="256" r="16.5" fill="#fff"/>
<circle cx="1084.1" cy="256" r="15.4" fill="#1496FA"/>
<rect x="1079.1" y="252.1" width="2.8" height="8.3" fill="#fff"/><rect x="1076.8" y="258.9" width="6.7" height="1.5" fill="#fff"/><path d="M1077.0 253.7L1079.2 252.1v1.8L1077.0 255.2z" fill="#fff"/><rect x="1087.0" y="252.1" width="2.8" height="8.3" fill="#fff"/><rect x="1084.7" y="258.9" width="6.7" height="1.5" fill="#fff"/><path d="M1084.9 253.7L1087.1 252.1v1.8L1084.9 255.2z" fill="#fff"/>
</svg>
<div class="a" style="left:0px;top:626px;width:1176px;height:3px;background:#fff"></div>
<div class="a" style="left:0px;top:0px;width:2px;height:629px;background:#EDF1FA"></div>
</div>
</body></html>
